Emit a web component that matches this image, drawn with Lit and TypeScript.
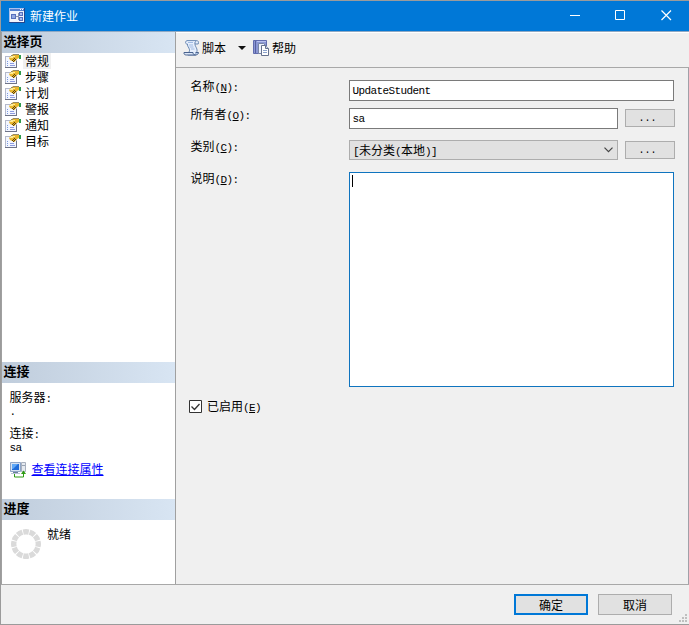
import { LitElement, html, css, svg } from "lit";
import { customElement, property } from "lit/decorators.js";

/** Mixed text: Latin runs use a half-width monospace cell beside full-width Han glyphs. */
const mixed = (text: string) =>
  text.split(/([\x21-\x7e]+)/).map((run, i) => (i % 2 ? html`<span class="lat">${run}</span>` : run));

const shared = css`
  * { box-sizing: border-box; }
  .lat { font-family: "Liberation Mono", monospace; font-size: 11px; line-height: 1; letter-spacing: -0.6px; }
  .key { text-decoration: underline; text-underline-offset: 1px; }
  svg { display: block; flex: none; }
`;

const pageIcon = html`<svg width="16" height="14" viewBox="0 0 16 14">
  <path d="M0 2h12v12H0z" fill="#b4b9ca"/>
  <path d="M1 3h10v10H1z" fill="#f3f6ff"/>
  <path d="M0 13h12v1H0zM11 7h1v7h-1z" fill="#6f7488"/>
  <path d="M2 7h1v1H2zM2 9h1v1H2zM2 11h1v1H2z" fill="#7c9be0"/>
  <path d="M5 9h4v1H5zM5 11h5v1H5z" fill="#8d9be0"/>
  <path d="M14 1h2v4h-2z" fill="#2f9a4c"/>
  <path d="M4 4l4-4h5l1 1v3l-2 1-2.500 3L7 7 5 6z" fill="#e9b62c"/>
  <path d="M8 0h6v1H8zM6 1h2v1H6z" fill="#958a68"/>
  <path d="M6 2h4v1H6zM5 3h3v1H5z" fill="#ffec94"/>
  <path d="M9 4h1v1H9zM8 5h1v1H8zM10 5h1v1h-1zM9 6h1v1H9zM7 6h1v1H7zM8 7h1v1H8z" fill="#5b420c"/>
</svg>`;

const appIcon = html`<svg width="16" height="15" viewBox="0 0 16 15">
  <path d="M0 0h16v15H0z" fill="#24468c"/>
  <path d="M0 0h15v14H0z" fill="#a9c0ee"/>
  <path d="M1 1h14v2H1z" fill="#5680cf"/>
  <path d="M1 3h14v11H1z" fill="#f1f4fc"/>
  <path d="M11 1h1v1h-1zM13 1h1v1h-1z" fill="#fff"/>
  <path d="M2 6h5v5H2z" fill="#5970bd"/><path d="M3 7h3v3H3z" fill="#93a9e1"/>
  <path d="M7 8.500h2M9.500 5.500v6M9 5.500h2M9 11.500h2" stroke="#8a92b0" fill="none"/>
  <path d="M10 4h4v4h-4zM10 9h4v4h-4z" fill="#5970bd"/><path d="M11 5h2v2h-2zM11 10h2v2h-2z" fill="#a9bcf0"/>
</svg>`;

const scriptIcon = html`<svg width="17" height="16" viewBox="0 0 17 16">
  <path d="M4 .6h9.500c2 0 2.300 1.500 1.700 3.400h-3.200c-.3 2.500 3.500 5 1.500 8.500l-2 2.500H5L6 12c2-3-2-5-1.500-8C2 4.500 2 1 4 .6z" fill="#e6effd" stroke="#6c8ab4"/>
  <path d="M12 4c-.3-1.300 0-2.200 1.300-3" fill="none" stroke="#5d7da9"/>
  <path d="M1 12.500h9c0 1.500.8 2.500 2.500 2.500H3.500C1.500 15 .8 14 1 12.500z" fill="#dbe6f7" stroke="#49638f"/>
  <path d="M12 15c2 0 3.500-.8 3.500-2.500h-3" fill="#b6c8e6" stroke="#49638f"/>
  <path d="M5 2.500h5M6 5h4M6.500 7h4M8 9h3.500" stroke="#a1bbe2" fill="none"/>
</svg>`;

const helpIcon = html`<svg width="16" height="16" viewBox="0 0 16 16">
  <path d="M.5.500h13v13H.500z" fill="#8b97d4" stroke="#626cae"/>
  <path d="M2.500 1v12" stroke="#56609f"/><path d="M4 1.500h9" stroke="#b8c0ee"/>
  <path d="M5.500 3.500h5l2 2v8h-7z" fill="#eef2fc" stroke="#7986a6"/>
  <path d="M8.500 5.500H12.500l3 3v7h-7z" fill="#fff" stroke="#65718d"/>
  <path d="M12.500 5.500v3h3" fill="#ccd6e8" stroke="#65718d"/>
  <path d="M10 10.500h4M10 12.500h4" stroke="#8ba2cc"/>
</svg>`;

const serverIcon = html`<svg width="17" height="16" viewBox="0 0 17 16">
  <path d="M.5.500h10v9H.500z" fill="#d7e2f2" stroke="#8fa5c6"/>
  <path d="M2 2h7v6H2z" fill="#1f6bd8"/><path d="M2 2h6L3 7H2z" fill="#5fa8f7"/>
  <path d="M3 10h5v1H3z" fill="#6d7f9d"/><path d="M1 11h9v1H1z" fill="#b8c4d6"/>
  <path d="M11.500.500h4v9h-4z" fill="#e6eaf0" stroke="#a8b0bd"/>
  <path d="M12 3.500h3" stroke="#98a3b2"/>
  <path d="M4.500 12v3h9V10" fill="none" stroke="#2e9c12"/>
  <path d="M11 12l2.500-3.500L16 12z" fill="#2e9c12"/>
</svg>`;

/** One titled block of the left pane. */
@customElement("side-section")
class SideSection extends LitElement {
  @property() heading = "";
  static styles = [shared, css`
    :host { display: flex; flex-direction: column; }
    .head { height: 21px; line-height: 17px; padding-left: 1.500px; font-size: 13px; font-weight: 700;
      background: linear-gradient(90deg, #c0cddc, #d8e5f3); }
  `];
  render() {
    return html`<div class="head">${this.heading}</div><slot></slot>`;
  }
}

@customElement("push-button")
class PushButton extends LitElement {
  @property() label = "";
  static styles = [shared, css`
    :host { display: flex; align-items: center; justify-content: center; background: #e1e1e1;
      border: 1px solid #adadad; box-sizing: border-box; line-height: 16px; }
    :host([primary]) { border: 2px solid #0078d7; }
    .dots { font-family: "Liberation Mono", monospace; font-size: 10px; padding: 2px 5px 0 0; }
  `];
  render() {
    return this.label === "..." ? html`<span class="dots">...</span>` : html`<span>${this.label}</span>`;
  }
}

@customElement("app-root")
class AppRoot extends LitElement {
  pages = ["常规", "步骤", "计划", "警报", "通知", "目标"];

  static styles = [shared, css`
    :host { display: block; width: 689px; height: 625px; color: #000;
      font: 12px/16px "Noto Sans CJK SC", sans-serif; }
    .window { height: 625px; display: flex; flex-direction: column; background: #f0f0f0;
      border: solid #9b9b9b; border-width: 1px 0 1px 1px; overflow: hidden; }
    .title { height: 30px; background: #0078d7; color: #fff; display: flex; align-items: center; padding-left: 8px; }
    .title svg { margin-top: -2px; }
    .title .name { flex: 1; margin: -1px 0 0 5px; }
    .title .controls { display: flex; margin-right: -1px; }
    .title .controls svg { width: 46px; height: 30px; margin: 0; }
    .body { height: 554px; display: flex; border-top: 1px solid #8fa9c4; border-bottom: 1px solid #a8a8a8; }
    .side { width: 175px; background: #fff; border: solid #a0a0a0; border-width: 0 1px; display: flex; flex-direction: column; }
    .pages { flex: none; height: 330px; }
    .conn { flex: none; height: 137px; }
    .list { padding-left: 3px; }
    .page { display: flex; align-items: center; height: 16px; }
    .page span { margin-left: 2px; padding: 0 2px; line-height: 16px; }
    .page.on span { background: #f0f0f0; }
    .info { padding: 6px 0 0 7.500px; }
    .caption { height: 16px; line-height: 15px; }
    .value { height: 12px; line-height: 10px; margin-bottom: 8px; }
    .link { display: flex; align-items: center; height: 16px; color: #00f;
      text-decoration: underline; text-underline-offset: 1px; }
    .link svg { margin: 2px 5px 0 0; }
    .status { display: flex; padding: 6px 0 0 9px; }
    .status span { margin-left: 6px; }
    .status svg { margin-top: 3px; }
    .main { flex: 1; display: flex; flex-direction: column; }
    .tools { height: 36px; border-bottom: 1px solid #a8a8a8; box-shadow: inset 0 1px #fff;
      display: flex; align-items: center; padding: 0 0 3px 7px; }
    .tools span { margin-left: 2px; }
    .tools .drop { margin: 0 7px 0 11.500px; }
    .tools .drop ~ span { margin-left: 3.500px; }
    .form { flex: 1; border-right: 1px solid #a0a0a8; padding: 12px 0 0 14.500px; }
    .row { display: grid; grid-template-columns: 158.500px 269px 50px; }
    .row push-button { margin: 1px 0 0 7px; width: 50px; height: 18px; }
    .row label { margin-top: -2px; }
    .owner { margin-top: 7px; }
    .cat { margin-top: 11px; }
    .desc { margin-top: 12px; }
    .field { height: 21px; border: 1px solid #7a7a7a; background: #fff; padding-left: 2.500px; line-height: 15px; }
    .wide { width: 325px; }
    .combo { height: 20px; border: 1px solid #adadad; background: #e1e1e1; display: flex; align-items: center;
      justify-content: space-between; padding: 0 4px 0 3px; }
    .area { height: 215px; border: 1px solid #0f74bf; background: #fff; padding: 2px; }
    .caret { width: 1px; height: 12px; background: #000; }
    .check { display: flex; align-items: center; margin: 11px 0 0 -1.500px; height: 16px; }
    .check svg { margin: 1px 5px 0 0; }
    .foot { flex: 1; display: flex; padding: 9px 1px 0 513px; }
    .foot push-button { width: 74px; height: 21px; margin-right: 10px; }
    .grip { align-self: flex-end; margin: 0 0 2px -3px; }
  `];

  label(text: string, key: string) {
    return html`<label>${text}<span class="lat">(<span class="key">${key}</span>):</span></label>`;
  }

  spinner() {
    return html`<svg width="30" height="30" viewBox="-15 -15 30 30">
      ${Array.from({ length: 12 }, (_, i) => svg`<path d="M-3.300 -14.500Q0 -15.500 3.300 -14.500L2.200 -9.300Q0 -9.900 -2.200 -9.300Z" fill="#dadada" transform="rotate(${i * 30})"/>`)}
    </svg>`;
  }

  render() {
    return html`<div class="window">
      <div class="title">
        ${appIcon}<span class="name">新建作业</span>
        <div class="controls">
          <svg viewBox="0 0 46 30"><path d="M18 14.500h10" stroke="#fff"/></svg>
          <svg viewBox="0 0 46 30"><path d="M17.500 9.500h9v9h-9z" stroke="#fff" fill="none"/></svg>
          <svg viewBox="0 0 46 30"><path d="M17.500 9.500l9.500 9.500M27 9.500L17.500 19" stroke="#fff" stroke-width="1.200"/></svg>
        </div>
      </div>
      <div class="body">
        <div class="side">
          <side-section class="pages" heading="选择页">
            <div class="list">
              ${this.pages.map((p, i) => html`<div class="page ${i ? "" : "on"}">${pageIcon}<span>${p}</span></div>`)}
            </div>
          </side-section>
          <side-section class="conn" heading="连接">
            <div class="info">
              <div class="caption">${mixed("服务器:")}</div>
              <div class="value">${mixed(".")}</div>
              <div class="caption">${mixed("连接:")}</div>
              <div class="value">${mixed("sa")}</div>
              <div class="link">${serverIcon}<span>查看连接属性</span></div>
            </div>
          </side-section>
          <side-section heading="进度">
            <div class="status">${this.spinner()}<span>就绪</span></div>
          </side-section>
        </div>
        <div class="main">
          <div class="tools">
            ${scriptIcon}<span>脚本</span>
            <svg class="drop" width="8" height="4"><path d="M0 0h8L4 4z" fill="#111"/></svg>
            ${helpIcon}<span>帮助</span>
          </div>
          <div class="form">
            <div class="row">${this.label("名称", "N")}<div class="field wide">${mixed("UpdateStudent")}</div></div>
            <div class="row owner">${this.label("所有者", "O")}<div class="field">${mixed("sa")}</div><push-button label="..."></push-button></div>
            <div class="row cat">${this.label("类别", "C")}
              <div class="combo"><span>${mixed("[未分类(本地)]")}</span>
                <svg width="9" height="6"><path d="M.5.700l4 4 4-4" fill="none" stroke="#444" stroke-width="1.200"/></svg></div>
              <push-button label="..."></push-button></div>
            <div class="row desc">${this.label("说明", "D")}<div class="area wide"><div class="caret"></div></div></div>
            <div class="check">
              <svg width="13" height="13"><path d="M.5.500h12v12H.500z" fill="#fff" stroke="#333"/><path d="M2.500 6.500l3 3 5-5.500" fill="none" stroke="#333" stroke-width="1.300"/></svg>
              <span>已启用<span class="lat">(<span class="key">E</span>)</span></span>
            </div>
          </div>
        </div>
      </div>
      <div class="foot">
        <push-button primary label="确定"></push-button>
        <push-button label="取消"></push-button>
        <svg class="grip" width="8" height="8" fill="#bfbfbf"><path d="M6 0h2v2H6zM3 3h2v2H3zM6 3h2v2H6zM0 6h2v2H0zM3 6h2v2H3zM6 6h2v2H6z"/></svg>
      </div>
    </div>`;
  }
}
